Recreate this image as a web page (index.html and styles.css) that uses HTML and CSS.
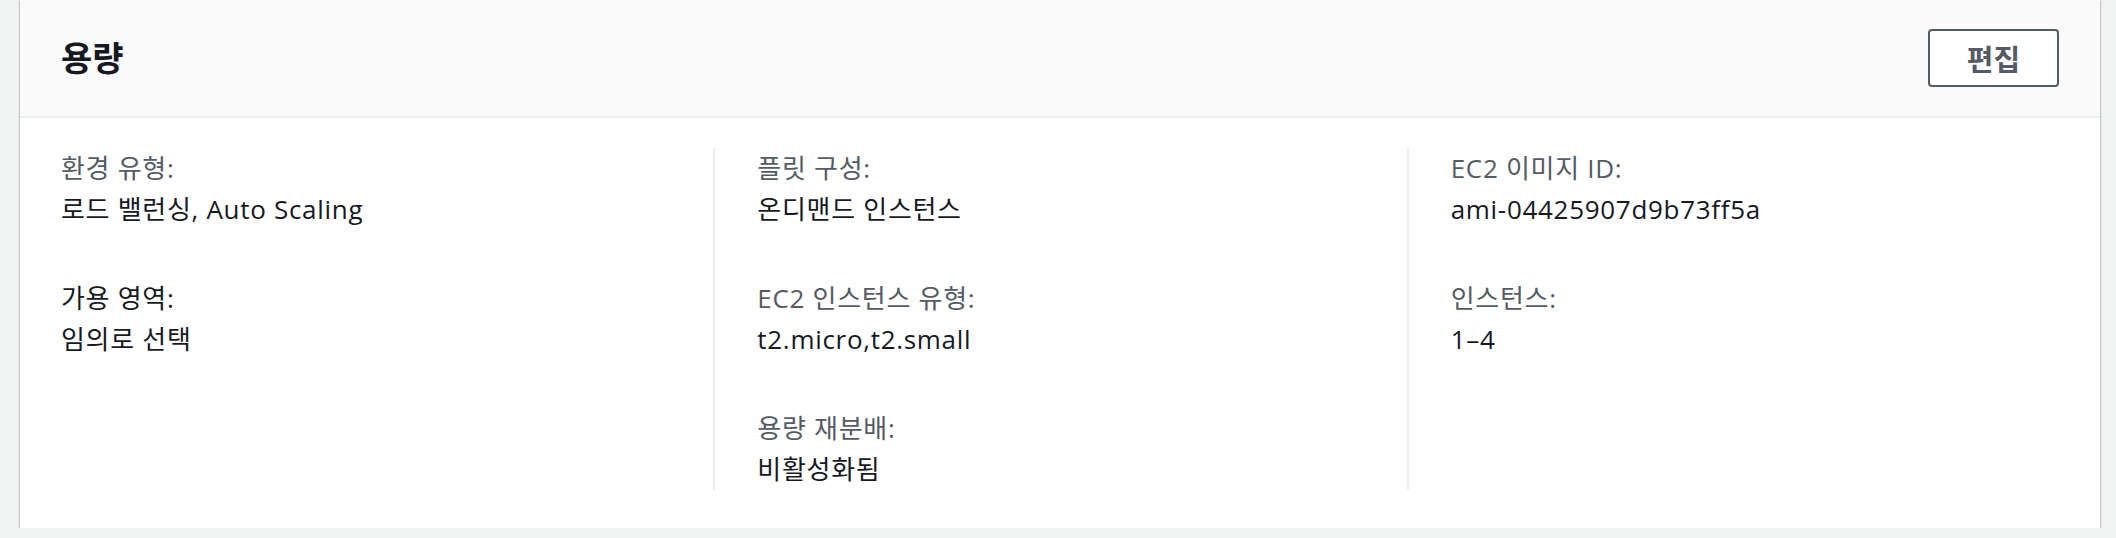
FILE: index.html
```html
<!DOCTYPE html>
<html lang="ko">
<head>
<meta charset="utf-8">
<title>용량</title>
<link rel="stylesheet" href="styles.css">
</head>
<body>
<section class="card">
  <header class="card-header">
    <h2 class="card-title">용량</h2>
    <button class="btn" type="button">편집</button>
  </header>
  <div class="card-body">
    <div class="col">
      <div class="item">
        <div class="label">환경 유형:</div>
        <div class="value">로드 밸런싱, Auto Scaling</div>
      </div>
      <div class="item">
        <div class="label dark">가용 영역:</div>
        <div class="value">임의로 선택</div>
      </div>
    </div>
    <div class="col">
      <div class="item">
        <div class="label">플릿 구성:</div>
        <div class="value">온디맨드 인스턴스</div>
      </div>
      <div class="item">
        <div class="label">EC2 인스턴스 유형:</div>
        <div class="value">t2.micro,t2.small</div>
      </div>
      <div class="item">
        <div class="label">용량 재분배:</div>
        <div class="value">비활성화됨</div>
      </div>
    </div>
    <div class="col">
      <div class="item">
        <div class="label">EC2 이미지 ID:</div>
        <div class="value">ami-04425907d9b73ff5a</div>
      </div>
      <div class="item">
        <div class="label">인스턴스:</div>
        <div class="value">1–4</div>
      </div>
    </div>
  </div>
</section>
</body>
</html>
```
FILE: styles.css
```css
html, body {
  margin: 0;
  padding: 0;
}
body {
  background: #f2f3f3;
  font-family: "Open Sans", "Noto Sans CJK KR", sans-serif;
  color: #16191f;
}
.card {
  margin-left: 20px;
  width: 2080px;
  background: #ffffff;
  box-shadow: 0 2px 1px 0 rgba(0, 28, 36, 0.35), 1px 1px 1px 0 rgba(0, 28, 36, 0.15), -1px 1px 1px 0 rgba(0, 28, 36, 0.15);
}
.card-header {
  height: 118px;
  box-sizing: border-box;
  background: #fafafa;
  border-bottom: 2px solid #eaeded;
  display: flex;
  align-items: center;
  justify-content: space-between;
  padding: 0 41px 0 41px;
}
.card-title {
  margin: 0;
  font-size: 34px;
  font-weight: 700;
  color: #16191f;
  line-height: 44px;
}
.btn {
  width: 131px;
  height: 58px;
  box-sizing: border-box;
  border: 2px solid #545b64;
  border-radius: 4px;
  background: #ffffff;
  color: #545b64;
  font-family: "Open Sans", "Noto Sans CJK KR", sans-serif;
  font-size: 29px;
  font-weight: 700;
  padding: 0;
}
.card-body {
  display: grid;
  grid-template-columns: repeat(3, 1fr);
  padding: 30px 0 38px;
}
.col {
  display: flex;
  flex-direction: column;
  gap: 48px;
  padding-left: 41px;
}
.col + .col {
  border-left: 2px solid #eaeded;
  padding-left: 42px;
}
.label {
  font-size: 26px;
  line-height: 41px;
  letter-spacing: 0.7px;
  color: #545b64;
}
.label.dark {
  color: #16191f;
}
.value {
  font-size: 26px;
  line-height: 41px;
  letter-spacing: 0.7px;
  color: #16191f;
}
```
